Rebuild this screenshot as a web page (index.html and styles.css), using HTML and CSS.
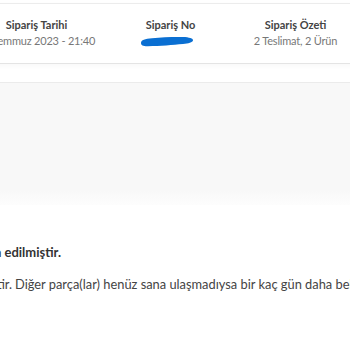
FILE: index.html
```
<!DOCTYPE html>
<html lang="tr">
<head>
    <meta charset="UTF-8">
    <meta name="viewport" content="width=device-width, initial-scale=1.0">
    <title>Sipariş Detayı</title>
    <link rel="stylesheet" href="styles.css">
</head>
<body>

    <div class="page">
        <!-- Order summary row -->
        <section class="summary">
            <div class="summary-col">
                <span class="label">Sipariş Tarihi</span>
                <span class="value">12 Temmuz 2023 - 21:40</span>
            </div>
            <div class="summary-col">
                <span class="label">Sipariş No</span>
                <svg class="scribble" width="54" height="12" viewBox="0 0 54 12">
                    <path d="M1 8 C1 4.8, 5 3.8, 12 3.2 C22 2.2, 33 1.8, 43 2 C49 2.2, 53.5 3.4, 53 5.4 C52.5 7.4, 48.5 8.4, 43 9 C33 10, 20 11, 8 11.2 C3 11.3, 1 10.2, 1 8 Z" fill="#0a6fd2"/>
                </svg>
            </div>
            <div class="summary-col">
                <span class="label">Sipariş Özeti</span>
                <span class="value">2 Teslimat, 2 Ürün</span>
            </div>
        </section>

        <div class="tabs"></div>
        <div class="delivery-box"></div>

        <!-- Partial delivery notice -->
        <section class="notice">
            <p class="notice-title"><span>Siparişin kısmi olarak ifa edilmiştir.</span></p>
            <p class="notice-text">
                <span class="notice-lead"><span>Siparişindeki ürünlerin bir kısmı teslim edilmiştir.</span></span>
                <span class="notice-rest">Diğer parça(lar) henüz sana ulaşmadıysa bir kaç gün daha beklemeni rica ederiz.</span>
            </p>
        </section>
    </div>

</body>
</html>
```

FILE: styles.css
```
body {
    margin: 0;
    padding: 0;
    background-color: #fff;
    font-family: Lato, "Open Sans", sans-serif;
    color: #333;
    overflow: hidden;
}
.page {
    width: 420px;
    margin-left: -32px;
}
.summary {
    display: grid;
    grid-template-columns: 137px 131px 119px;
    margin-top: 3px;
    padding: 14px 0 15px;
    border-top: 1px solid #ececec;
    border-bottom: 1px solid #e4e4e4;
    box-shadow: 0 2px 5px rgba(0, 0, 0, 0.03);
}
.summary-col {
    display: flex;
    flex-direction: column;
    align-items: center;
    gap: 2px;
}
.label {
    font-size: 11px;
    line-height: 14px;
    font-weight: bold;
    color: #444;
}
.value {
    font-size: 11px;
    line-height: 14px;
    letter-spacing: -0.2px;
    color: #777;
}
.scribble {
    display: block;
    margin: 1px 0 1px -8px;
}
.tabs {
    height: 18px;
    border-bottom: 1px solid #ebebeb;
}
.delivery-box {
    height: 122px;
    background: linear-gradient(#f8f8f8 88%, #fdfdfd);
}
.notice {
    padding-top: 39px;
    white-space: nowrap;
}
.notice-title {
    display: flex;
    justify-content: flex-end;
    width: 93px;
    margin: 0 0 16px;
    font-size: 13px;
    line-height: 16px;
    font-weight: bold;
    color: #333;
}
.notice-text {
    display: flex;
    margin: 0;
    font-size: 12.85px;
    line-height: 16px;
    color: #444;
}
.notice-lead {
    display: flex;
    justify-content: flex-end;
    flex: 0 0 44px;
    min-width: 0;
}
.notice-rest {
    margin-left: 3px;
}
```
